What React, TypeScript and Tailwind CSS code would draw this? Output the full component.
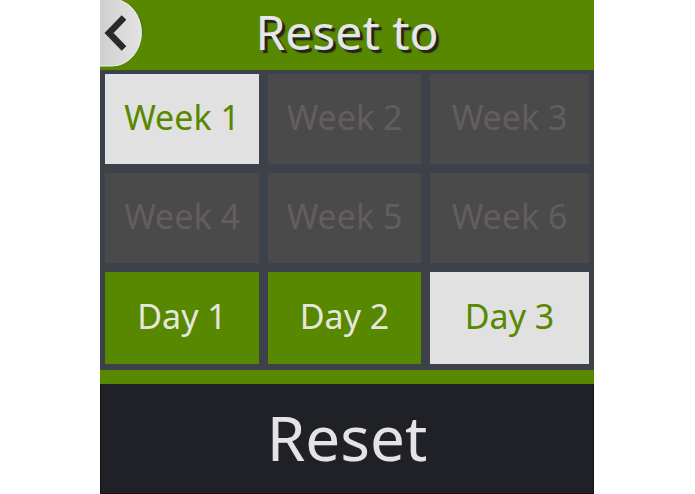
type CellState = "selected" | "available" | "disabled";

const cells: { label: string; state: CellState }[] = [
  { label: "Week 1", state: "selected" },
  { label: "Week 2", state: "disabled" },
  { label: "Week 3", state: "disabled" },
  { label: "Week 4", state: "disabled" },
  { label: "Week 5", state: "disabled" },
  { label: "Week 6", state: "disabled" },
  { label: "Day 1", state: "available" },
  { label: "Day 2", state: "available" },
  { label: "Day 3", state: "selected" },
];

const cellStyles: Record<CellState, string> = {
  selected: "bg-[#e1e1e1] text-[#588700]",
  available: "bg-[#588700] text-[#e4e8dc]",
  disabled: "bg-[#4a4a4a] text-[#635d5e]",
};

function Header() {
  return (
    <header className="relative flex h-[70px] items-center justify-center bg-[#588700] pb-1.5">
      <button
        type="button"
        aria-label="Back"
        className="absolute top-0 left-0 h-[70px] w-[46px]"
      >
        <svg viewBox="0 0 46 70" className="h-full w-full" aria-hidden="true">
          <defs>
            <linearGradient id="knob" x1="0" y1="0" x2="1" y2="0">
              <stop offset="0" stopColor="#cfcfcf" />
              <stop offset="1" stopColor="#e3e3e3" />
            </linearGradient>
          </defs>
          <circle cx="11" cy="31" r="32" fill="#486b08" />
          <path
            d="M-2 -1H12A29.500 33.500 0 0 1 12 66H-2Z"
            fill="url(#knob)"
            stroke="#efefef"
            strokeWidth="1"
          />
          <path
            d="M24 17.500L9 33L24 48.500"
            fill="none"
            stroke="#292929"
            strokeWidth="6.500"
          />
        </svg>
      </button>
      <h1 className="text-5xl leading-[60px] text-[#e6e6e6] [text-shadow:3px_3px_1px_#222]">
        Reset to
      </h1>
    </header>
  );
}

export default function App() {
  return (
    <div className="bg-white pr-[101px] pl-[100px] font-['Noto_Sans',sans-serif]">
      <main>
        <Header />
        <div className="grid grid-cols-[154fr_153fr_159fr] grid-rows-[90px_90px_92px] gap-[9px] bg-[#3d414a] px-[5px] pt-1 pb-[6px]">
          {cells.map(({ label, state }) => (
            <button
              key={label}
              type="button"
              disabled={state === "disabled"}
              aria-pressed={state === "selected"}
              className={`pb-1 text-[34px] leading-10 whitespace-nowrap ${cellStyles[state]}`}
            >
              {label}
            </button>
          ))}
        </div>
        <div className="h-[14px] bg-[#588700]" />
        <button
          type="button"
          className="h-[110px] w-full border border-t-0 border-[#111114] bg-[#202126] pb-1 text-[62px] leading-[80px] text-[#e4e4e4]"
        >
          Reset
        </button>
      </main>
    </div>
  );
}
